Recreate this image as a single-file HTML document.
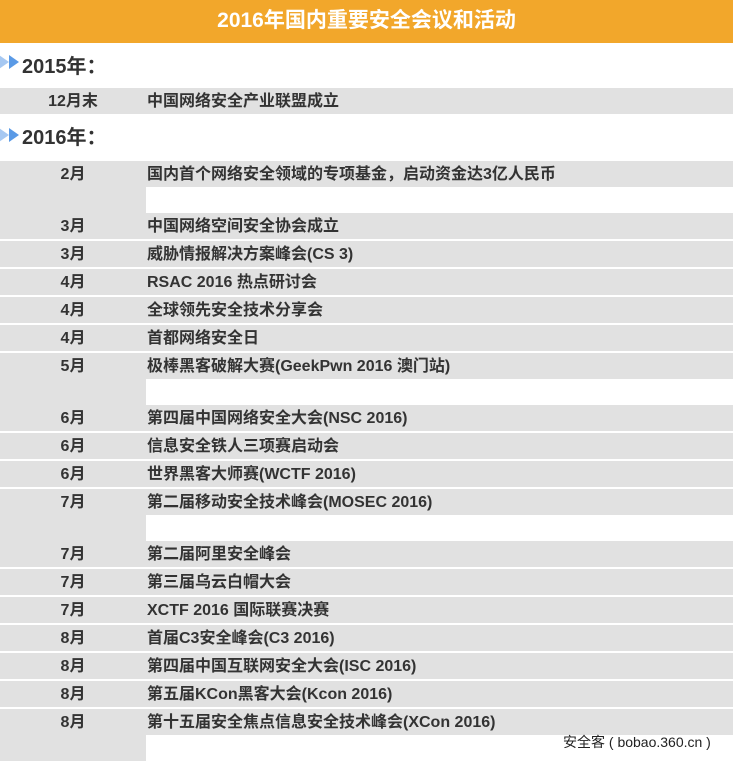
<!DOCTYPE html>
<html><head><meta charset="utf-8"><style>
*{margin:0;padding:0;box-sizing:border-box}
body{width:733px;height:758px;background:#fff;position:relative;overflow:hidden;font-family:"Liberation Sans","Noto Sans CJK SC",sans-serif;color:#333;font-weight:bold}
.hd{position:absolute;left:0;top:0;width:733px;height:43px;background:#F2A72B;color:#fff;font-size:21px;text-align:center;line-height:42px}
.yr{position:absolute;left:22px;font-size:20px;height:26px;line-height:28px}
.ar{position:absolute;left:0;width:20px;height:14px}
.r{position:absolute;left:0;width:733px;height:26px;background:#E1E1E1;font-size:16px;line-height:28px}
.r.t{height:52px;background:linear-gradient(to right,#E1E1E1 146px,transparent 146px),linear-gradient(to bottom,#E1E1E1 26px,#fff 26px)}
.m{position:absolute;left:0;width:146px;text-align:center}
.e{position:absolute;left:147px}
.ft{position:absolute;left:563px;top:733px;font-size:14px;font-weight:normal;color:#222;line-height:18px}
</style></head><body>
<div class="hd">2016年国内重要安全会议和活动</div>
<svg class="ar" style="top:55px" viewBox="0 0 20 14"><polygon points="-1,0 9,7 -1,14" fill="#a6c8f2"/><polygon points="9,0 19,7 9,14" fill="#5a9ae6"/></svg>
<div class="yr" style="top:53px">2015年：</div>
<div class="r" style="top:88px"><span class="m">12月末</span><span class="e">中国网络安全产业联盟成立</span></div>
<svg class="ar" style="top:128px" viewBox="0 0 20 14"><polygon points="-1,0 9,7 -1,14" fill="#a6c8f2"/><polygon points="9,0 19,7 9,14" fill="#5a9ae6"/></svg>
<div class="yr" style="top:124px">2016年：</div>
<div class="r t" style="top:161px"><span class="m">2月</span><span class="e">国内首个网络安全领域的专项基金，启动资金达3亿人民币</span></div>
<div class="r" style="top:213px"><span class="m">3月</span><span class="e">中国网络空间安全协会成立</span></div>
<div class="r" style="top:241px"><span class="m">3月</span><span class="e">威胁情报解决方案峰会(CS 3)</span></div>
<div class="r" style="top:269px"><span class="m">4月</span><span class="e">RSAC 2016 热点研讨会</span></div>
<div class="r" style="top:297px"><span class="m">4月</span><span class="e">全球领先安全技术分享会</span></div>
<div class="r" style="top:325px"><span class="m">4月</span><span class="e">首都网络安全日</span></div>
<div class="r t" style="top:353px"><span class="m">5月</span><span class="e">极棒黑客破解大赛(GeekPwn 2016 澳门站)</span></div>
<div class="r" style="top:405px"><span class="m">6月</span><span class="e">第四届中国网络安全大会(NSC 2016)</span></div>
<div class="r" style="top:433px"><span class="m">6月</span><span class="e">信息安全铁人三项赛启动会</span></div>
<div class="r" style="top:461px"><span class="m">6月</span><span class="e">世界黑客大师赛(WCTF 2016)</span></div>
<div class="r t" style="top:489px"><span class="m">7月</span><span class="e">第二届移动安全技术峰会(MOSEC 2016)</span></div>
<div class="r" style="top:541px"><span class="m">7月</span><span class="e">第二届阿里安全峰会</span></div>
<div class="r" style="top:569px"><span class="m">7月</span><span class="e">第三届乌云白帽大会</span></div>
<div class="r" style="top:597px"><span class="m">7月</span><span class="e">XCTF 2016 国际联赛决赛</span></div>
<div class="r" style="top:625px"><span class="m">8月</span><span class="e">首届C3安全峰会(C3 2016)</span></div>
<div class="r" style="top:653px"><span class="m">8月</span><span class="e">第四届中国互联网安全大会(ISC 2016)</span></div>
<div class="r" style="top:681px"><span class="m">8月</span><span class="e">第五届KCon黑客大会(Kcon 2016)</span></div>
<div class="r t" style="top:709px"><span class="m">8月</span><span class="e">第十五届安全焦点信息安全技术峰会(XCon 2016)</span></div>
<div class="ft">安全客 ( bobao.360.cn )</div>
</body></html>
